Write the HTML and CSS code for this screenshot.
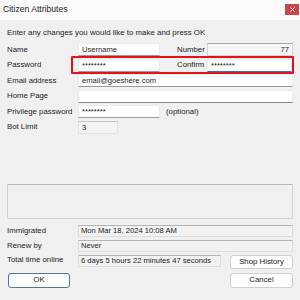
FILE: index.html
```html
<!DOCTYPE html>
<html>
<head>
<meta charset="utf-8">
<link rel="stylesheet" href="styles.css">
</head>
<body>
<div class="window">
  <div class="titlebar">
    <span class="title">Citizen Attributes</span>
    <span class="close"><svg width="5" height="5" viewBox="0 0 5 5"><path d="M0.5 0.5 L4.5 4.5 M4.5 0.5 L0.5 4.5" stroke="#fff" stroke-width="1"/></svg></span>
  </div>
  <div class="content">
    <p class="intro">Enter any changes you would like to make and press OK</p>
    <div class="form">
      <div class="row">
        <span class="label">Name</span>
        <span class="field edit short">Username</span>
        <span class="label mid">Number</span>
        <span class="field readonly num">77</span>
      </div>
      <div class="row">
        <span class="label">Password</span>
        <span class="field edit short">********</span>
        <span class="label mid">Confirm</span>
        <span class="field edit focused confirm">********</span>
        <span class="highlight"></span>
      </div>
      <div class="row">
        <span class="label">Email address</span>
        <span class="field edit wide">email@goeshere.com</span>
      </div>
      <div class="row">
        <span class="label">Home Page</span>
        <span class="field edit wide dark"></span>
      </div>
      <div class="row">
        <span class="label">Privilege password</span>
        <span class="field edit short">********</span>
        <span class="note">(optional)</span>
      </div>
      <div class="row">
        <span class="label">Bot Limit</span>
        <span class="field readonly light tiny">3</span>
      </div>
    </div>
    <div class="box"></div>
    <div class="info">
      <div class="irow">
        <span class="label">Immigrated</span>
        <span class="field static wide">Mon Mar 18, 2024 10:08 AM</span>
      </div>
      <div class="irow">
        <span class="label">Renew by</span>
        <span class="field static wide">Never</span>
      </div>
      <div class="irow trow">
        <span class="label">Total time online</span>
        <span class="field static total">6 days 5 hours 22 minutes 47 seconds</span>
        <button class="btn side">Shop History</button>
      </div>
    </div>
    <div class="footer">
      <button class="btn ok">OK</button>
      <button class="btn side">Cancel</button>
    </div>
  </div>
</div>
</body>
</html>
```
FILE: styles.css
```css
* { box-sizing: border-box; }
html, body { margin: 0; padding: 0; }
body {
  width: 300px;
  height: 300px;
  background: #f0f0f0;
  font-family: "Liberation Sans", Arial, sans-serif;
  color: #1b1b1b;
  overflow: hidden;
}
.window {
  width: 300px;
  height: 300px;
  background: #f0f0f0;
  display: flex;
  flex-direction: column;
}
.titlebar {
  height: 20px;
  background: #fcfafb;
  display: flex;
  align-items: flex-start;
  padding-left: 3px;
}
.title {
  font-size: 8.6px;
  line-height: 10px;
  margin-top: 4px;
  color: #222;
}
.close {
  margin-left: auto;
  margin-right: 1px;
  margin-top: 4px;
  width: 14px;
  height: 11px;
  background: #c9464e;
  display: flex;
  align-items: center;
  justify-content: center;
}
.content {
  padding: 0 7px 0 7px;
  display: flex;
  flex-direction: column;
}
.intro {
  margin: 8px 0 0 0;
  font-size: 7.9px;
  line-height: 10px;
}
.form {
  margin-top: 5px;
  display: flex;
  flex-direction: column;
  gap: 2.6px;
}
.row {
  position: relative;
  display: flex;
  align-items: center;
  height: 13px;
}
.label {
  width: 71px;
  flex: none;
  font-size: 7.8px;
  line-height: 10px;
  white-space: nowrap;
}
.label.mid {
  width: 30px;
  margin-left: 17px;
}
.field {
  flex: none;
  height: 100%;
  font-size: 7.6px;
  line-height: 11px;
  padding: 0 3px;
  white-space: nowrap;
  overflow: hidden;
}
.edit {
  background: #ffffff;
  border: 1px solid #ececec;
  border-bottom: 1px solid #9a9a9a;
}
.edit.dark { border-bottom-color: #8a8a8a; }
.focused { border-bottom: 1.5px solid #2f6fc4; }
.readonly {
  background: #f6f6f6;
  border: 1px solid #d4d4d4;
  border-top-color: #a8a8a8;
}
.readonly.light {
  background: #f4f4f4;
  border-color: #e2e2e2;
  border-top-color: #c8c8c8;
}
.short { width: 82px; }
.num { width: 86px; text-align: right; }
.confirm { width: 85px; }
.wide { width: 215px; }
.tiny { width: 40px; }
.note {
  margin-left: 6px;
  font-size: 7.8px;
}
.highlight {
  position: absolute;
  left: 64px;
  right: -1px;
  top: -2.5px;
  bottom: -2.5px;
  border: 2.5px solid #e0141b;
  border-radius: 1px;
}
.box {
  margin-top: 50px;
  height: 35px;
  border: 1px solid #d2d2d2;
  border-top-color: #b8b8b8;
  background: #f0f0f0;
}
.info {
  margin-top: 6px;
  display: flex;
  flex-direction: column;
  gap: 3px;
}
.irow {
  display: flex;
  align-items: center;
  height: 12px;
}
.irow .field { line-height: 10px; }
.trow { align-items: flex-start; }
.static {
  background: #f2f2f2;
  border: 1px solid #dcdcdc;
  border-top-color: #b4b4b4;
  padding: 0 2px;
}
.total { width: 143px; }
.btn {
  font-family: "Liberation Sans", Arial, sans-serif;
  font-size: 7.8px;
  color: #1b1b1b;
  background: #fdfdfd;
  border: 1px solid #d0d0d0;
  border-radius: 3px;
  padding: 0;
  height: 14px;
  line-height: 12px;
}
.side {
  width: 63px;
  margin-left: auto;
}
.footer {
  margin-top: 6px;
  display: flex;
  align-items: center;
}
.ok {
  width: 62px;
  height: 15px;
  margin-left: 1px;
  border-color: #5b7496;
}
.footer .side { height: 15px; }
```
